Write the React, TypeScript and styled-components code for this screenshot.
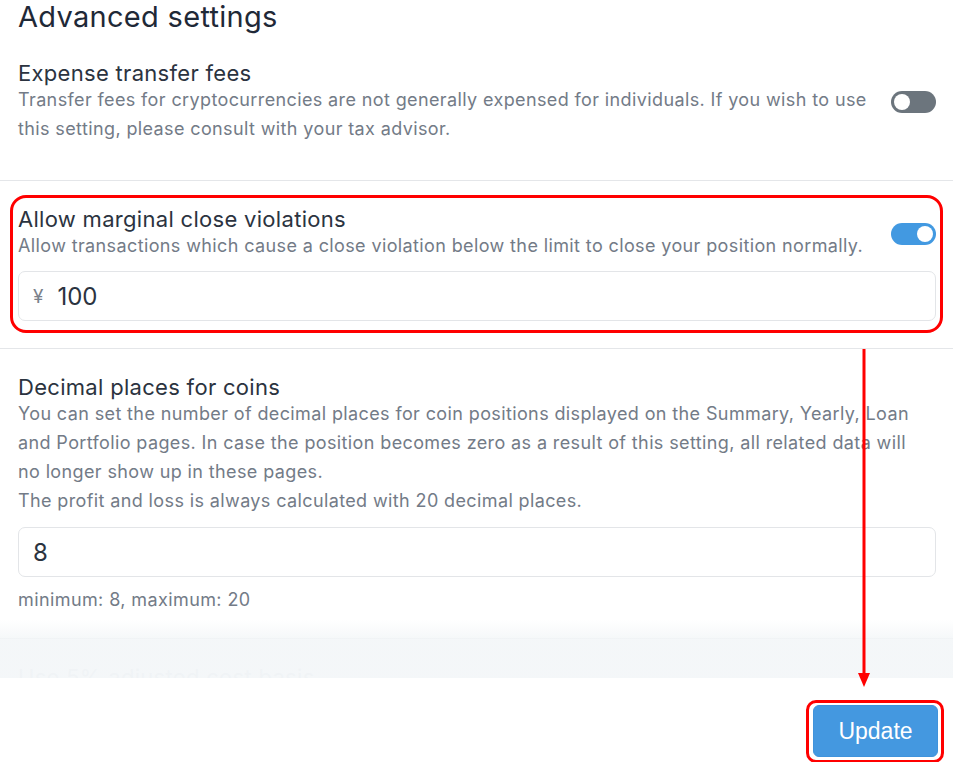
import React from "react";
import styled, { createGlobalStyle, css } from "styled-components";

const GlobalStyle = createGlobalStyle`
  html, body {
    margin: 0;
    padding: 0;
    background: #ffffff;
  }
  * {
    box-sizing: border-box;
  }
`;

const FONT = `Inter, "Noto Sans", "Liberation Sans", sans-serif`;

const Page = styled.div`
  position: relative;
  width: 953px;
  height: 762px;
  overflow: hidden;
  display: flex;
  flex-direction: column;
  background: #ffffff;
  font-family: ${FONT};
`;

const ScrollArea = styled.div`
  position: relative;
  height: 678px;
  flex-shrink: 0;
  overflow: hidden;
`;

const Title = styled.h2`
  margin: 0;
  padding: 0 18px;
  font-size: 29px;
  line-height: 34px;
  font-weight: 400;
  color: #1f2937;
  letter-spacing: 0.3px;
`;

const Section = styled.section<{ $first?: boolean; $annotated?: boolean }>`
  position: relative;
  padding: ${(p) => (p.$first ? "27px 17px 37px 18px" : "26px 17px 27px 18px")};
  border-top: ${(p) => (p.$first ? "none" : "1px solid #e4e6e9")};

  ${(p) =>
    p.$annotated &&
    css`
      &::after {
        content: "";
        position: absolute;
        top: 14px;
        left: 10px;
        right: 10px;
        bottom: 15px;
        border: 3px solid #ff0000;
        border-radius: 16px;
        pointer-events: none;
      }
    `}
`;

const SettingRow = styled.div`
  display: flex;
  align-items: center;
  gap: 6px;
`;

const SettingText = styled.div`
  flex: 1;
  min-width: 0;
`;

const Heading = styled.h3<{ $faded?: boolean }>`
  margin: 0;
  font-size: 22px;
  line-height: 24px;
  font-weight: 400;
  letter-spacing: 0.3px;
  color: ${(p) => (p.$faded ? "#d3d9df" : "#2b3340")};
`;

const Description = styled.p`
  margin: 0;
  max-width: 900px;
  font-size: 18px;
  line-height: 29px;
  letter-spacing: 0.38px;
  color: #737b87;
`;

const Toggle = styled.div<{ $on?: boolean }>`
  position: relative;
  flex-shrink: 0;
  width: 45px;
  height: 22px;
  border-radius: 11px;
  background: ${(p) => (p.$on ? "#4299e1" : "#6c757d")};

  &::before {
    content: "";
    position: absolute;
    top: 3px;
    left: ${(p) => (p.$on ? "26px" : "3px")};
    width: 16px;
    height: 16px;
    border-radius: 50%;
    background: #ffffff;
  }
`;

const InputBox = styled.div<{ $gap?: number }>`
  display: flex;
  align-items: center;
  gap: 14px;
  height: 50px;
  margin-top: ${(p) => p.$gap ?? 11}px;
  padding: 0 14px;
  border: 1px solid #e3e5e8;
  border-radius: 7px;
  background: #ffffff;
`;

const Prefix = styled.span`
  font-size: 19px;
  color: #7a818b;
`;

const Value = styled.span`
  font-size: 24px;
  color: #2b3340;
`;

const Helper = styled.div`
  margin-top: 12px;
  font-size: 18px;
  line-height: 22px;
  letter-spacing: 0.4px;
  color: #737b87;
`;

const Fade = styled.div`
  position: absolute;
  left: 0;
  right: 0;
  bottom: 0;
  height: 58px;
  background: linear-gradient(
    to bottom,
    rgba(243, 246, 248, 0) 0px,
    rgba(243, 246, 248, 0.9) 20px,
    rgba(243, 246, 248, 0.9) 100%
  );
  pointer-events: none;
`;

const Footer = styled.footer`
  flex: 1;
  display: flex;
  justify-content: flex-end;
  align-items: flex-start;
  padding: 27px 15px 0 0;
  background: #ffffff;
`;

const ButtonWrap = styled.div`
  position: relative;

  &::after {
    content: "";
    position: absolute;
    top: -5px;
    left: -7px;
    right: -6px;
    bottom: -6px;
    border: 3px solid #ff0000;
    border-radius: 10px;
    pointer-events: none;
  }
`;

const UpdateButton = styled.button`
  width: 125px;
  height: 52px;
  border: 1px solid #3f93dc;
  border-radius: 6px;
  background: #4498e0;
  color: #ffffff;
  font-family: "Liberation Sans", Arial, sans-serif;
  font-size: 23px;
  cursor: pointer;
`;

const Arrow = styled.svg`
  position: absolute;
  left: 856px;
  top: 349px;
  pointer-events: none;
`;

export default function App() {
  return (
    <>
      <GlobalStyle />
      <Page>
        <ScrollArea>
          <Title>Advanced settings</Title>

          <Section $first>
            <SettingRow>
              <SettingText>
                <Heading>Expense transfer fees</Heading>
                <Description>
                  Transfer fees for cryptocurrencies are not generally expensed
                  for individuals. If you wish to use this setting, please
                  consult with your tax advisor.
                </Description>
              </SettingText>
              <Toggle />
            </SettingRow>
          </Section>

          <Section $annotated>
            <SettingRow>
              <SettingText>
                <Heading>Allow marginal close violations</Heading>
                <Description>
                  Allow transactions which cause a close violation below the
                  limit to close your position normally.
                </Description>
              </SettingText>
              <Toggle $on />
            </SettingRow>
            <InputBox>
              <Prefix>¥</Prefix>
              <Value>100</Value>
            </InputBox>
          </Section>

          <Section>
            <Heading>Decimal places for coins</Heading>
            <Description>
              You can set the number of decimal places for coin positions
              displayed on the Summary, Yearly, Loan and Portfolio pages. In
              case the position becomes zero as a result of this setting, all
              related data will no longer show up in these pages.
              <br />
              The profit and loss is always calculated with 20 decimal places.
            </Description>
            <InputBox $gap={12}>
              <Value>8</Value>
            </InputBox>
            <Helper>minimum: 8, maximum: 20</Helper>
          </Section>

          <Section>
            <Heading $faded>Use 5% adjusted cost basis</Heading>
          </Section>

          <Fade />
        </ScrollArea>

        <Footer>
          <ButtonWrap>
            <UpdateButton>Update</UpdateButton>
          </ButtonWrap>
        </Footer>

        <Arrow width="16" height="342" viewBox="0 0 16 342">
          <line x1="8" y1="0" x2="8" y2="326" stroke="#ff0000" strokeWidth="3" />
          <polygon points="2,324 14,324 8,338" fill="#ff0000" />
        </Arrow>
      </Page>
    </>
  );
}
